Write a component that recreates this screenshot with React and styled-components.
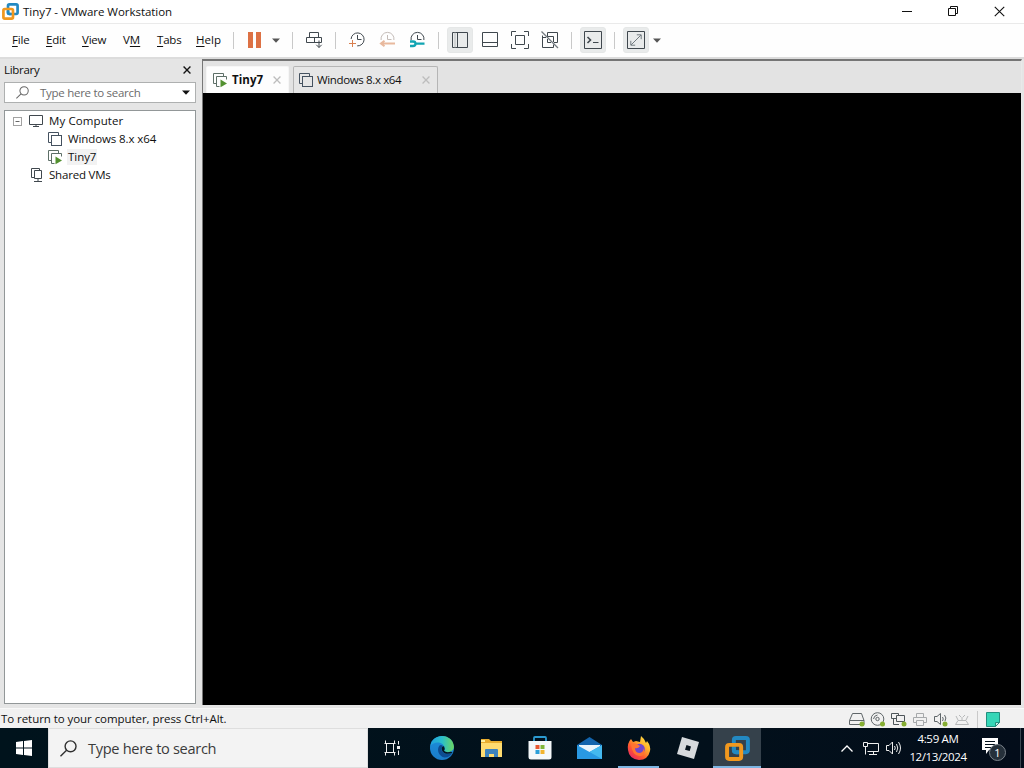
import React from "react";
import styled, { createGlobalStyle } from "styled-components";

const Global = createGlobalStyle`
  * { box-sizing: border-box; }
  body { margin: 0; background: #e5e5e5; font-family: "Open Sans", "Noto Sans", sans-serif; font-size: 11.5px; color: #101010; overflow: hidden; }
`;
const Screen = styled.div`width: 1024px; height: 768px; display: flex; flex-direction: column; overflow: hidden;`;
const Label = styled.span`
  white-space: pre;
  line-height: 16px;
  letter-spacing: ${(p) => p.$track || -0.2}px;
  font-weight: ${(p) => (p.$bold ? 700 : 400)};
`;
const Svg = styled.svg`
  display: block; flex: none; overflow: visible; fill: none;
  stroke: ${(p) => p.$color || "#40484e"};
  stroke-width: ${(p) => p.$sw || 1};
  margin-left: ${(p) => p.$ml || 0}px;
`;
const Icon = ({ w = 18, h = 18, children, ...rest }) => (
  <Svg width={w} height={h} viewBox={`0 0 ${w} ${h}`} {...rest}>{children}</Svg>
);

const TitleBar = styled.header`
  height: 23px; flex: none; background: #fff; display: flex; align-items: center; padding-left: 2px;
`;
const TitleText = styled(Label)`margin-left: 4px; flex: 1;`;
const WindowButtons = styled.div`display: flex; width: 138px; height: 22px; margin-right: 2px; padding-bottom: 1px;`;
const WindowButton = styled.div`width: 46px; display: grid; place-items: center;`;

const ToolBar = styled.nav`
  height: 36px; flex: none; display: flex; align-items: center; padding: 0 0 1px 12px;
  background: #fefefe; border-top: 1px solid #eaeaea; border-bottom: 2px solid #dcdcdc;
`;
const MenuItem = styled(Label)`
  width: ${(p) => p.$w}px; flex: none;
  u { text-underline-offset: 2px; text-decoration-thickness: 1px; }
`;
const Separator = styled.i`width: 1px; height: 17px; flex: none; background: #c9c9c9; margin-left: ${(p) => p.$ml || 0}px;`;
const Pressed = styled.div`
  width: 26px; height: 26px; flex: none; display: grid; place-items: center; margin-left: 8px;
  background: #e9ebeb; border: 1px solid #e5e7e7; border-radius: 3px;
`;
const PauseBars = styled.div`
  width: 13px; height: 16px; margin-left: 14px; border: solid #dd7144; border-width: 0 5px; flex: none;
`;

const Body = styled.main`height: 649px; flex: none; display: flex;`;
const Library = styled.aside`width: 202px; flex: none; padding: 0 6px 4px 4px; display: flex; flex-direction: column; background: #e5e5e5;`;
const LibraryHead = styled.div`height: 23px; display: flex; justify-content: space-between; align-items: center; padding: 0 5px 2px 0;`;
const SearchBox = styled.div`
  height: 21px; border: 1px solid #aeb0b0; background: #fff; display: flex; align-items: center; color: #6b6b6b; padding-left: 11px; padding-right: 5px;
`;
const SearchText = styled(Label)`flex: 1; margin-left: 11px;`;
const Tree = styled.div`margin-top: 7px; flex: 1; background: #fff; border: 1px solid #929798; padding-top: 1px;`;
const TreeRow = styled.div`height: 18px; display: flex; align-items: center; padding-left: ${(p) => p.$indent}px;`;
const Name = styled(Label)`margin-left: 4px; padding: 0 1px; background: ${(p) => (p.$active ? "#f2f2f2" : "none")};`;

const Viewer = styled.section`
  width: 820px; border-left: 1px solid #777; border-top: 2px solid #757575; border-right: 1px solid #e9e9e9;
  display: flex; flex-direction: column; margin-bottom: 3px;
`;
const TabStrip = styled.div`height: 32px; flex: none; background: #e3e3e3; display: flex; align-items: flex-end; padding-left: 3px; gap: 4px;`;
const Tab = styled.div`
  width: ${(p) => p.$w}px; height: 27px; display: flex; align-items: center; padding: 0 7px 0 ${(p) => (p.$active ? 6 : 5)}px;
  background: ${(p) => (p.$active ? "#fdfdfd" : "#e6e6e6")};
  border: 1px solid ${(p) => (p.$active ? "#f6f6f6" : "#b5b5b5")}; border-bottom: 0; border-radius: 2px 2px 0 0;
`;
const TabName = styled(Label)`flex: 1; margin-left: ${(p) => (p.$bold ? 4 : 3)}px;`;
const Guest = styled.div`flex: 1; background: #000;`;

const StatusBar = styled.footer`
  height: 20px; flex: none; background: #f1f1f1; display: flex; align-items: center; padding: 1px 0 0 1px; border-top: 1px solid #f8f8f8;
`;
const StatusText = styled(Label)`flex: 1;`;
const Devices = styled.div`display: flex; align-items: center; width: 175px; gap: 5px;`;

const TaskBar = styled.div`height: 40px; flex: none; display: flex; background: linear-gradient(90deg, #00131c, #02101b 70%, #030d1a);`;
const Start = styled.div`width: 48px; display: grid; place-items: center;`;
const TaskSearch = styled.div`
  width: 320px; background: #f3f3f3; border: 1px solid #dedede; display: flex; align-items: center; padding-left: 11px;
  font-size: 14.6px; color: #3b3b3b;
`;
const TaskSearchText = styled(Label)`margin-left: 11px; line-height: 20px;`;
const TaskButton = styled.div`
  width: ${(p) => p.$w || 49}px; display: grid; place-items: center;
  background: ${(p) => (p.$active ? "#35414b" : "none")};
  box-shadow: ${(p) => (p.$open ? "inset 0 -2px #7db5e2" : "none")};
  ${(p) => (p.$open && !p.$active ? "width: 41px; margin: 0 4px;" : "")}
`;
const Tray = styled.div`margin-left: auto; width: 183px; display: flex; align-items: center; color: #fff;`;
const Clock = styled.div`
  width: 70px; margin-left: 1px; display: flex; flex-direction: column; align-items: center; line-height: 18px; gap: 2px;
`;
const Notices = styled.div`position: relative; width: 24px; height: 22px; margin: 2px 0 0 9px;`;
const Count = styled.b`
  position: absolute; left: 7px; top: 6px; width: 17px; height: 17px; border-radius: 50%;
  background: #25303a; border: 1px solid #7a828a; font-size: 11px; font-weight: 400; line-height: 15px; text-align: center;
`;
const Peek = styled.i`width: 1px; height: 40px; background: #3b4751; margin-left: auto; margin-right: 3px;`;

const VmLogo = ({ size = 17 }) => (
  <Svg width={size} height={size} viewBox="0 0 24 24" $sw={3.8}>
    <rect x="8.5" y="2" width="13.5" height="13.5" rx="2" stroke="#2389c2" />
    <rect x="2" y="8.5" width="13.5" height="13.5" rx="2" stroke="#f1981e" />
    <path d="M8.5 11V13.5Q8.5 15.5 10.5 15.5H13" stroke="#2389c2" />
  </Svg>
);
const Caret = ({ ml, dark }) => (
  <Icon w={8} h={5} $ml={ml} $color="none"><path d="M0 .5H8L4 4.8Z" fill={dark ? "#111" : "#555"} /></Icon>
);
const Vm = ({ running }) => (
  <Icon w={15} h={15} $color={running ? "#5d6f67" : "#44515f"}>
    <path d="M3.5 10.5H.5V.5H10.5V3.5" />
    {running ? <path d="M6.5 13.5H3.5V3.5H13.5V6.5" /> : <rect x="3.5" y="3.5" width="10" height="10" />}
    {running && <path d="M7.5 6.5L14 10.4L7.5 14.2Z" fill="#52902f" stroke="none" />}
  </Icon>
);
const Cross = ({ size = 8, color = "#bdbdbd", sw = 1.6 }) => (
  <Svg width={size} height={size} viewBox="0 0 10 10" $color={color} $sw={sw}><path d="M.7.7L9.3 9.3M9.3.7L.7 9.3" /></Svg>
);
const Lens = ({ size = 13, color, sw = 1.1 }) => (
  <Svg width={size} height={size} viewBox="0 0 14 14" $color={color} $sw={sw}><circle cx="8.7" cy="5.2" r="4.5" /><path d="M5.4 8.5L.4 13.4" /></Svg>
);
const Dot = ({ x = 12.5, y = 12 }) => <circle cx={x} cy={y} r="2.5" fill="#86ae32" stroke="none" />;

function MainToolbar() {
  return (
    <ToolBar>
      <MenuItem $w={34}><u>F</u>ile</MenuItem>
      <MenuItem $w={36}><u>E</u>dit</MenuItem>
      <MenuItem $w={41}><u>V</u>iew</MenuItem>
      <MenuItem $w={34} $track={-0.01}>V<u>M</u></MenuItem>
      <MenuItem $w={39}><u>T</u>abs</MenuItem>
      <MenuItem $w={37} $track={0.05}><u>H</u>elp</MenuItem>
      <Separator />
      <PauseBars />
      <Caret ml={11} />
      <Separator $ml={12} />
      <Icon $ml={13}><path d="M3.5 1.5H12.5V6.5H3.5ZM.5 6.5H15.5V11.5H.5ZM8.5 6.5V11.5M13 9.5V16.5M10.3 13.8L13 16.5L15.7 13.8" /></Icon>
      <Separator $ml={11} />
      <Icon $ml={13}>
        <path d="M2.1 8A6.5 6.5 0 1 1 8.2 14.9M8.5 4V8.5H12.5" /><path d="M3.5 9V16M0 12.5H7" stroke="#d98050" />
      </Icon>
      <Icon $ml={12} $color="#c4bcb8">
        <path d="M2.1 9A6.5 6.5 0 1 1 14.9 9M8.5 4V8.5H12.5" /><path d="M16 12.5H2M5.5 9.8L2 12.5L5.5 15.2" stroke="#e8b99e" strokeWidth="2" />
      </Icon>
      <Icon $ml={12}>
        <path d="M2.1 9A6.5 6.5 0 1 1 14.9 9M8.5 4V8.5H12.5" />
        <path d="M1 10.5H4Q6.5 10.5 6.5 12.7Q6.5 15 4 15H1M6.5 12.7H15.5" stroke="#12a5b3" strokeWidth="2.3" />
      </Icon>
      <Separator $ml={11} />
      <Pressed><Icon w={16} h={16}><path d="M.5.5H15.5V15.5H.5ZM5.5.5V15.5" /><path d="M3 .5V15.5" stroke="#b9bdbf" /></Icon></Pressed>
      <Icon $ml={8}><path d="M1.5 1.5H16.5V15.5H1.5ZM1.5 11.5H16.5" /></Icon>
      <Icon $ml={12}><path d="M.5 5V.5H5M13 .5H17.5V5M17.5 13V17.5H13M5 17.5H.5V13M4.5 4.5H13.5V13.5H4.5Z" /></Icon>
      <Icon $ml={12}><path d="M6.5 5V1.5H16.5V11.5H13M6 5.5H12.5V11M1.5 4.5V16.5H12.5V13.5M1.5 6.5H5M6.5 8V11.5H10" /><path d="M.5.5L17 17" stroke="#737a7f" strokeWidth="1.2" /></Icon>
      <Separator $ml={12} />
      <Pressed><Icon w={18} h={18}><path d="M.5.5H17.5V17.5H.5Z" /><path d="M3.5 6L6.5 9L3.5 12" strokeWidth="1.6" /><path d="M9 11.5H14.5" /></Icon></Pressed>
      <Separator $ml={8} />
      <Pressed><Icon w={18} h={18}><path d="M.5.5H17.5V17.5H.5Z" /><path d="M4 14L14 4M9.8 3.8H14.2V8.2M8.2 14.2H3.8V9.8" stroke="#727b80" /></Icon></Pressed>
      <Caret ml={4} />
    </ToolBar>
  );
}

function LibraryPane() {
  return (
    <Library>
      <LibraryHead><Label $track={-0.3}>Library</Label><Cross color="#151515" size={8} sw={1.7} /></LibraryHead>
      <SearchBox><Lens color="#686868" /><SearchText $track={-0.28}>Type here to search</SearchText><Caret dark /></SearchBox>
      <Tree>
        <TreeRow $indent={8}>
          <Icon w={9} h={9} $color="#a2a2a2"><rect x=".5" y=".5" width="8" height="8" /><path d="M2.5 4.5H6.5" stroke="#666" /></Icon>
          <Icon w={15} h={12} $ml={7}><path d="M.5.5H13.5V9.5H.5ZM4 11.5H10M7 9.5V11" /></Icon>
          <Name $track={0.1}>My Computer</Name>
        </TreeRow>
        <TreeRow $indent={43}><Vm /><Name $track={-0.1}>Windows 8.x x64</Name></TreeRow>
        <TreeRow $indent={43}><Vm running /><Name $active $track={-0.05}>Tiny7</Name></TreeRow>
        <TreeRow $indent={26}>
          <Icon w={13} h={14}><path d="M3.5 9.5H.5V.5H8.5V2.5M3.5 2.5H10.5V10.5H3.5ZM7 10.5V13M3 13.5H11" /></Icon>
          <Name>Shared VMs</Name>
        </TreeRow>
      </Tree>
    </Library>
  );
}

function DeviceIcons() {
  return (
    <Devices>
      <Icon w={16} h={15} $color="#5f6669"><path d="M3.5 1.5H12.5L15 8.5V12.5H.5V8.5ZM.5 8.5H15" /><Dot x={13} /></Icon>
      <Icon w={16} h={15} $color="#5f6669"><circle cx="7.5" cy="7" r="6.3" /><circle cx="7.5" cy="7" r="1.7" /><path d="M3.5 7Q4 3.5 7.5 3" /><Dot x={12.5} /></Icon>
      <Icon w={16} h={15} $color="#4d5559"><path d="M5.5 6.5H.5V1.5H7.5V3.5M5.5 3.5H13.5V9.5H5.5ZM2.5 6.5V12.5H8" /><Dot x={13} /></Icon>
      <Icon w={16} h={15} $color="#a6a9ab"><path d="M4.5 5.5V1.5H11.5V5.5M4 10.5H1.5V5.5H14.5V10.5H12M4.5 8.5H11.5V13.5H4.5Z" /></Icon>
      <Icon w={16} h={15} $color="#5f6669"><path d="M1.5 4.5H4L7.5 1.5V12.5L4 9.5H1.5ZM9.5 5Q11 7 9.5 9M11.5 3Q14 6 12 9" /><Dot x={12} /></Icon>
      <Icon w={16} h={15} $color="#b6b8b9"><path d="M4 8.5H12L14.5 12.5H1.5ZM4 8L2 4M8 8V5M12 8L14 4M5 3L7 5M11 3L9 5" /></Icon>
      <Separator $ml={2} />
      <Icon w={15} h={15} $ml={3} $color="#228e7e"><path d="M.5.5H13.5V10.5L9.5 14.5H.5Z" fill="#36d6b7" /><path d="M9.5 14.5V10.5H13.5Z" fill="#c5eee5" /></Icon>
    </Devices>
  );
}

const Edge = () => (
  <Svg width="24" height="24" viewBox="0 0 24 24" $color="none">
    <defs>
      <linearGradient id="edgeTop"><stop stopColor="#1f9fe0" /><stop offset=".5" stopColor="#2abfca" /><stop offset="1" stopColor="#6cd65f" /></linearGradient>
      <linearGradient id="edgeBase" x1="0" y1="0" x2="0" y2="1"><stop stopColor="#1c8fdc" /><stop offset="1" stopColor="#1a7bc8" /></linearGradient>
    </defs>
    <circle cx="12" cy="12" r="12" fill="url(#edgeBase)" />
    <path d="M.3 10C2-3 22-3.500 23.800 10C24.500 15 19 17 15 15.800C13.500 15.200 15 14 14.600 11.500C13.500 5.500 4 4.500 .3 10Z" fill="url(#edgeTop)" />
    <path d="M9.500 9.500C6 14 9 20.500 14.500 21.500C18 21.500 21 19.500 22.500 17C17 19.500 11.500 17 11.500 13Q11.500 11 13 10Q11 8.500 9.500 9.500Z" fill="#0d4c91" />
    <path d="M11.700 12Q12 10 14 10.200Q15.300 12.500 14 14.700Q16 17 21 15.700L22.700 16.500C17 19.500 11.500 17 11.700 12Z" fill="#051722" />
  </Svg>
);
const Firefox = () => (
  <Svg width="24" height="24" viewBox="0 0 24 24" $color="none">
    <defs><linearGradient id="fox" x1="1" y1="0" x2=".2" y2="1"><stop stopColor="#fff04c" /><stop offset=".4" stopColor="#ffb02c" /><stop offset=".7" stopColor="#ff582f" /><stop offset="1" stopColor="#e52466" /></linearGradient></defs>
    <path d="M4 3L6 6L9 5L13 6L14 0Q18 3 19 7L20 5Q24 10 23 15Q21 24 12 24Q2 23 1 14Q0 7 4 3Z" fill="url(#fox)" />
    <circle cx="12.5" cy="13" r="5.3" fill="#7047cf" />
    <path d="M4 8Q8 6 13 10Q11 13 8 12Q8 17 13 17Q17 16 16 12Q20 20 12 20Q5 19 4 8Z" fill="#ff7432" />
  </Svg>
);

function TaskApps() {
  return (
    <>
      <TaskButton $w={49}><Icon w={17} h={16} $color="#eee" $sw={1}><path d="M1.500 .5V3.500H10.500V.5M1.500 15.500V12.500H10.500V15.500M.5 3.500H11.500M.5 12.500H11.500M2.500 3.500V12.500M9.500 3.500V12.500M14.500 1V4.500M14.500 10.500V15" /><path d="M13 6H16V9H13Z" fill="#eee" stroke="none" /></Icon></TaskButton>
      <TaskButton $w={50}><Edge /></TaskButton>
      <TaskButton $w={48}>
        <Icon w={23} h={20} $color="none"><path d="M1 1H9L11 3H22V18H1Z" fill="#e9ae2f" /><path d="M1 5H22V19H1Z" fill="#ffdc70" /><path d="M5 19V12Q5 11 6 11H17Q18 11 18 12V19H14V16H9V19Z" fill="#3d83bd" /><path d="M1 2H5V4H1Z" fill="#fff1a0" /></Icon>
      </TaskButton>
      <TaskButton>
        <Icon w={24} h={24} $color="none"><path d="M6 6V2Q6 1 7 1H17Q18 1 18 2V6" stroke="#2b9ad0" strokeWidth="1.8" /><path d="M.5 5H23.500V21Q23.500 23.500 21 23.500H3Q.5 23.500 .5 21Z" fill="#f4f8fa" /><path d="M7.500 9H11.500V13H7.500Z" fill="#e85831" /><path d="M12.500 9H16.500V13H12.500Z" fill="#80b638" /><path d="M7.500 14H11.500V18H7.500Z" fill="#2b9fd9" /><path d="M12.500 14H16.500V18H12.500Z" fill="#f2b42e" /></Icon>
      </TaskButton>
      <TaskButton $w={50}>
        <Icon w={25} h={23} $color="none"><path d="M0 8L12.5 0L25 8V22H0Z" fill="#1264ad" /><path d="M2 8H23V18H2Z" fill="#e9f4fb" /><path d="M0 8L12.5 15L25 8V22H0Z" fill="#2999e3" /><path d="M12.5 15L25 8V22Z" fill="#44b9ef" /></Icon>
      </TaskButton>
      <TaskButton $open><Firefox /></TaskButton>
      <TaskButton $w={50}>
        <Icon w={22} h={22} $color="none"><path d="M5 0L22 5L17 22L0 17Z" fill="#d7dadd" /><path d="M9.500 8L14 9.400L12.700 14L8 12.800Z" fill="#07131c" /></Icon>
      </TaskButton>
      <TaskButton $w={48} $active $open><VmLogo size={25} /></TaskButton>
    </>
  );
}

export default function App() {
  return (
    <Screen>
      <Global />
      <TitleBar>
        <VmLogo />
        <TitleText $track={-0.04}>Tiny7 - VMware Workstation</TitleText>
        <WindowButtons>
          <WindowButton><Icon w={10} h={10} $color="#111"><path d="M0 5.5H10" /></Icon></WindowButton>
          <WindowButton><Icon w={10} h={10} $color="#111"><path d="M.5 2.5H7.5V9.5H.5ZM2.5 2.5V.5H9.5V7.5H7.5" /></Icon></WindowButton>
          <WindowButton><Cross size={11} color="#111" sw={1} /></WindowButton>
        </WindowButtons>
      </TitleBar>
      <MainToolbar />
      <Body>
        <LibraryPane />
        <Viewer>
          <TabStrip>
            <Tab $w={83} $active><Vm running /><TabName $bold $track={0.05}>Tiny7</TabName><Cross /></Tab>
            <Tab $w={145}><Vm /><TabName $track={-0.36}>Windows 8.x x64</TabName><Cross /></Tab>
          </TabStrip>
          <Guest />
        </Viewer>
      </Body>
      <StatusBar><StatusText $track={-0.06}>To return to your computer, press Ctrl+Alt.</StatusText><DeviceIcons /></StatusBar>
      <TaskBar>
        <Start><Icon w={16} h={16} $color="none"><path d="M0 2L7 1V7.5H0ZM8 .9L16 0V7.5H8ZM0 8.5H7V15L0 14ZM8 8.5H16V16L8 15Z" fill="#fff" /></Icon></Start>
        <TaskSearch><Lens size={17} color="#303030" sw={1.15} /><TaskSearchText $track={-0.32}>Type here to search</TaskSearchText></TaskSearch>
        <TaskApps />
        <Tray>
          <Icon w={12} h={7} $color="#fff" $sw={1.3}><path d="M.5 6.5L6 1L11.5 6.5" /></Icon>
          <Icon w={17} h={15} $ml={10} $color="#eee"><path d="M4.5 2.5H15.5V10.5H4.5M.5 1.5H4.5V5.5H.5ZM2.5 5.5V13.5M10.5 10.5V13.5M6 13.5H14" /></Icon>
          <Icon w={16} h={14} $ml={6} $color="#eee"><path d="M.5 4.5H3L6.5 1V13L3 9.5H.5ZM8.5 5Q10 7 8.5 9M10.5 3Q13 7 10.5 11M12.5 1Q16.5 7 12.5 13" /></Icon>
          <Clock><Label $track={-0.3}>4:59 AM</Label><Label $track={-0.38}>12/13/2024</Label></Clock>
          <Notices>
            <Icon w={16} h={17} $color="#02101b"><path d="M0 0H16V12H7L4 16V12H0Z" fill="#fff" stroke="none" /><path d="M3 3.5H13M3 6.5H13M3 9.5H13" /></Icon>
            <Count>1</Count>
          </Notices>
          <Peek />
        </Tray>
      </TaskBar>
    </Screen>
  );
}
